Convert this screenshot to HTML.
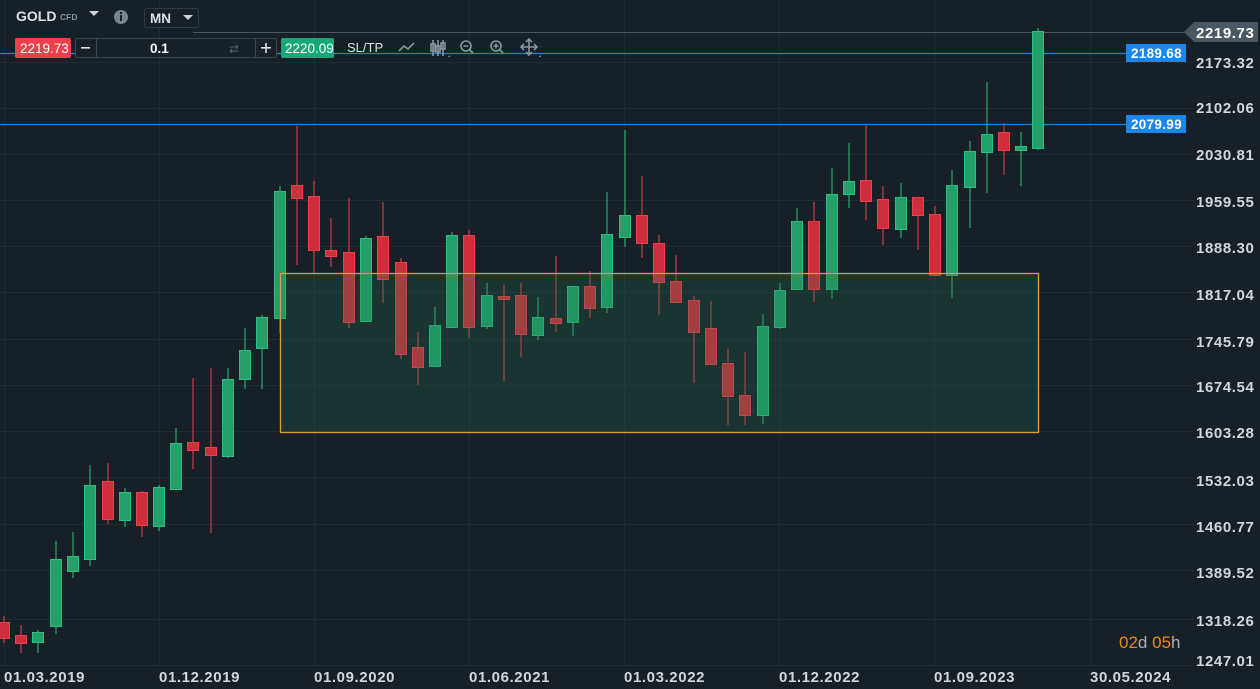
<!DOCTYPE html>
<html><head><meta charset="utf-8"><style>
html,body{margin:0;padding:0;background:#172027;width:1260px;height:689px;overflow:hidden;font-family:"Liberation Sans",Arial,sans-serif}
svg{position:absolute;left:0;top:0}
.ax{fill:#d3d6da;font-size:15px;font-family:"Liberation Sans",sans-serif;font-weight:bold;letter-spacing:0.6px}
</style></head><body>
<svg width="1260" height="689" viewBox="0 0 1260 689">
<rect width="1260" height="689" fill="#172027"/>
<g stroke="#212b32" stroke-width="1">
<line x1="4.5" y1="0" x2="4.5" y2="665"/><line x1="159.5" y1="0" x2="159.5" y2="665"/><line x1="314.5" y1="0" x2="314.5" y2="665"/><line x1="469.5" y1="0" x2="469.5" y2="665"/><line x1="624.5" y1="0" x2="624.5" y2="665"/><line x1="779.5" y1="0" x2="779.5" y2="665"/><line x1="934.5" y1="0" x2="934.5" y2="665"/><line x1="1090.5" y1="0" x2="1090.5" y2="665"/>
<line x1="0" y1="62.5" x2="1193" y2="62.5"/><line x1="0" y1="108.5" x2="1193" y2="108.5"/><line x1="0" y1="154.5" x2="1193" y2="154.5"/><line x1="0" y1="200.5" x2="1193" y2="200.5"/><line x1="0" y1="246.5" x2="1193" y2="246.5"/><line x1="0" y1="292.5" x2="1193" y2="292.5"/><line x1="0" y1="339.5" x2="1193" y2="339.5"/><line x1="0" y1="385.5" x2="1193" y2="385.5"/><line x1="0" y1="431.5" x2="1193" y2="431.5"/><line x1="0" y1="477.5" x2="1193" y2="477.5"/><line x1="0" y1="524.5" x2="1193" y2="524.5"/><line x1="0" y1="570.5" x2="1193" y2="570.5"/><line x1="0" y1="619.5" x2="1193" y2="619.5"/><line x1="0" y1="665.5" x2="1193" y2="665.5"/>
</g>
<line x1="193" y1="32.5" x2="1190" y2="32.5" stroke="#4a555d"/>
<line x1="0" y1="53.5" x2="1126" y2="53.5" stroke="#1a7fe0" stroke-width="1.3"/>
<line x1="0" y1="124.5" x2="1126" y2="124.5" stroke="#1a7fe0" stroke-width="1.3"/>
<g stroke-width="1">
<g fill="#24a06a" stroke="#2cc07e">
<line x1="38" y1="630" x2="38" y2="653"/><rect x="32.5" y="632.5" width="11" height="10"/>
<line x1="56" y1="541" x2="56" y2="634"/><rect x="50.5" y="559.5" width="11" height="67"/>
<line x1="73" y1="532" x2="73" y2="578"/><rect x="67.5" y="556.5" width="11" height="15"/>
<line x1="90" y1="465" x2="90" y2="566"/><rect x="84.5" y="485.5" width="11" height="74"/>
<line x1="125" y1="488" x2="125" y2="527"/><rect x="119.5" y="492.5" width="11" height="28"/>
<line x1="159" y1="485" x2="159" y2="531"/><rect x="153.5" y="487.5" width="11" height="39"/>
<line x1="176" y1="428" x2="176" y2="490"/><rect x="170.5" y="443.5" width="11" height="46"/>
<line x1="228" y1="368" x2="228" y2="458"/><rect x="222.5" y="379.5" width="11" height="77"/>
<line x1="245" y1="328" x2="245" y2="389"/><rect x="239.5" y="350.5" width="11" height="29"/>
<line x1="262" y1="315" x2="262" y2="389"/><rect x="256.5" y="317.5" width="11" height="31"/>
<line x1="280" y1="186" x2="280" y2="333"/><rect x="274.5" y="191.5" width="11" height="127"/>
<line x1="366" y1="236" x2="366" y2="322"/><rect x="360.5" y="238.5" width="11" height="83"/>
<line x1="435" y1="307" x2="435" y2="367"/><rect x="429.5" y="325.5" width="11" height="41"/>
<line x1="452" y1="232" x2="452" y2="328"/><rect x="446.5" y="235.5" width="11" height="92"/>
<line x1="487" y1="283" x2="487" y2="329"/><rect x="481.5" y="295.5" width="11" height="31"/>
<line x1="538" y1="297" x2="538" y2="340"/><rect x="532.5" y="317.5" width="11" height="18"/>
<line x1="573" y1="286" x2="573" y2="336"/><rect x="567.5" y="286.5" width="11" height="36"/>
<line x1="607" y1="192" x2="607" y2="313"/><rect x="601.5" y="234.5" width="11" height="73"/>
<line x1="625" y1="130" x2="625" y2="247"/><rect x="619.5" y="215.5" width="11" height="22"/>
<line x1="763" y1="314" x2="763" y2="424"/><rect x="757.5" y="326.5" width="11" height="89"/>
<line x1="780" y1="283" x2="780" y2="329"/><rect x="774.5" y="290.5" width="11" height="37"/>
<line x1="797" y1="208" x2="797" y2="290"/><rect x="791.5" y="221.5" width="11" height="68"/>
<line x1="832" y1="168" x2="832" y2="299"/><rect x="826.5" y="194.5" width="11" height="95"/>
<line x1="849" y1="143" x2="849" y2="208"/><rect x="843.5" y="181.5" width="11" height="13"/>
<line x1="901" y1="183" x2="901" y2="238"/><rect x="895.5" y="197.5" width="11" height="32"/>
<line x1="952" y1="170" x2="952" y2="298"/><rect x="946.5" y="185.5" width="11" height="90"/>
<line x1="970" y1="141" x2="970" y2="228"/><rect x="964.5" y="151.5" width="11" height="36"/>
<line x1="987" y1="82" x2="987" y2="193"/><rect x="981.5" y="134.5" width="11" height="18"/>
<line x1="1021" y1="132" x2="1021" y2="186"/><rect x="1015.5" y="146.5" width="11" height="4"/>
<line x1="1038" y1="28" x2="1038" y2="150"/><rect x="1032.5" y="31.5" width="11" height="117"/>
</g>
<g fill="#cf2f3c" stroke="#ee3f4b">
<line x1="4" y1="616" x2="4" y2="643"/><rect x="-1.5" y="622.5" width="11" height="16"/>
<line x1="21" y1="625" x2="21" y2="653"/><rect x="15.5" y="635.5" width="11" height="8"/>
<line x1="108" y1="463" x2="108" y2="524"/><rect x="102.5" y="481.5" width="11" height="38"/>
<line x1="142" y1="491" x2="142" y2="537"/><rect x="136.5" y="492.5" width="11" height="33"/>
<line x1="193" y1="378" x2="193" y2="469"/><rect x="187.5" y="442.5" width="11" height="8"/>
<line x1="211" y1="368" x2="211" y2="533"/><rect x="205.5" y="447.5" width="11" height="8"/>
<line x1="297" y1="126" x2="297" y2="265"/><rect x="291.5" y="185.5" width="11" height="13"/>
<line x1="314" y1="181" x2="314" y2="274"/><rect x="308.5" y="196.5" width="11" height="54"/>
<line x1="331" y1="218" x2="331" y2="267"/><rect x="325.5" y="250.5" width="11" height="6"/>
<line x1="349" y1="198" x2="349" y2="328"/><rect x="343.5" y="252.5" width="11" height="70"/>
<line x1="383" y1="202" x2="383" y2="303"/><rect x="377.5" y="236.5" width="11" height="43"/>
<line x1="401" y1="258" x2="401" y2="359"/><rect x="395.5" y="262.5" width="11" height="92"/>
<line x1="418" y1="332" x2="418" y2="385"/><rect x="412.5" y="347.5" width="11" height="20"/>
<line x1="469" y1="230" x2="469" y2="338"/><rect x="463.5" y="235.5" width="11" height="92"/>
<line x1="504" y1="285" x2="504" y2="381"/><rect x="498.5" y="296.5" width="11" height="3"/>
<line x1="521" y1="283" x2="521" y2="357"/><rect x="515.5" y="295.5" width="11" height="39"/>
<line x1="556" y1="256" x2="556" y2="332"/><rect x="550.5" y="318.5" width="11" height="5"/>
<line x1="590" y1="271" x2="590" y2="318"/><rect x="584.5" y="286.5" width="11" height="22"/>
<line x1="642" y1="176" x2="642" y2="258"/><rect x="636.5" y="215.5" width="11" height="28"/>
<line x1="659" y1="235" x2="659" y2="315"/><rect x="653.5" y="243.5" width="11" height="39"/>
<line x1="676" y1="255" x2="676" y2="303"/><rect x="670.5" y="281.5" width="11" height="21"/>
<line x1="694" y1="296" x2="694" y2="383"/><rect x="688.5" y="300.5" width="11" height="32"/>
<line x1="711" y1="301" x2="711" y2="364"/><rect x="705.5" y="328.5" width="11" height="36"/>
<line x1="728" y1="349" x2="728" y2="425"/><rect x="722.5" y="363.5" width="11" height="33"/>
<line x1="745" y1="352" x2="745" y2="425"/><rect x="739.5" y="395.5" width="11" height="20"/>
<line x1="814" y1="202" x2="814" y2="302"/><rect x="808.5" y="221.5" width="11" height="68"/>
<line x1="866" y1="125" x2="866" y2="220"/><rect x="860.5" y="180.5" width="11" height="21"/>
<line x1="883" y1="186" x2="883" y2="245"/><rect x="877.5" y="199.5" width="11" height="29"/>
<line x1="918" y1="197" x2="918" y2="250"/><rect x="912.5" y="197.5" width="11" height="18"/>
<line x1="935" y1="206" x2="935" y2="275"/><rect x="929.5" y="214.5" width="11" height="61"/>
<line x1="1004" y1="123" x2="1004" y2="175"/><rect x="998.5" y="132.5" width="11" height="18"/>
</g>
</g>
<rect x="280.5" y="273.5" width="758" height="159" fill="rgba(30,110,80,0.25)" stroke="#e09a38" stroke-width="1.3"/>
<g class="ax">
<text x="1196" y="68">2173.32</text><text x="1196" y="113">2102.06</text><text x="1196" y="160">2030.81</text><text x="1196" y="207">1959.55</text><text x="1196" y="253">1888.30</text><text x="1196" y="300">1817.04</text><text x="1196" y="347">1745.79</text><text x="1196" y="392">1674.54</text><text x="1196" y="438">1603.28</text><text x="1196" y="486">1532.03</text><text x="1196" y="532">1460.77</text><text x="1196" y="578">1389.52</text><text x="1196" y="626">1318.26</text><text x="1196" y="666">1247.01</text>
<text x="4" y="682">01.03.2019</text><text x="159" y="682">01.12.2019</text><text x="314" y="682">01.09.2020</text><text x="469" y="682">01.06.2021</text><text x="624" y="682">01.03.2022</text><text x="779" y="682">01.12.2022</text><text x="934" y="682">01.09.2023</text><text x="1090" y="682">30.05.2024</text>
</g>
<path d="M1184 32 L1194 22 H1258 V42 H1194 Z" fill="#4b5761"/>
<text x="1196" y="38" class="ax" style="fill:#fff">2219.73</text>
<rect x="1126" y="44" width="60" height="18" fill="#1a86f0"/>
<text x="1131" y="58" style="fill:#fff;font-size:13.5px;font-weight:bold;letter-spacing:0.3px">2189.68</text>
<rect x="1126" y="115" width="60" height="18" fill="#1a86f0"/>
<text x="1131" y="129" style="fill:#fff;font-size:13.5px;font-weight:bold;letter-spacing:0.3px">2079.99</text>
<text x="1119" y="648" style="font-size:17px;fill:#ea8a0f">02<tspan fill="#aab0b6">d</tspan> 05<tspan fill="#aab0b6">h</tspan></text>
<text x="16" y="21" style="fill:#dfe2e5;font-size:14px;font-weight:bold">GOLD</text>
<text x="60" y="20" style="fill:#8a939a;font-size:8.5px;font-weight:bold">CFD</text>
<path d="M89 11 H99 L94 16 Z" fill="#d0d4d8"/>
<circle cx="121" cy="17" r="7" fill="#7c858c"/><rect x="120" y="15" width="2" height="6" fill="#172027"/><rect x="120" y="12" width="2" height="2" fill="#172027"/>
<rect x="144.5" y="8.5" width="54" height="19" fill="#172027" stroke="#2f3a42" rx="2"/>
<text x="150" y="23" style="fill:#dfe2e5;font-size:13.5px;font-weight:bold">MN</text>
<path d="M183 15 H193 L188 20 Z" fill="#d0d4d8"/>
<rect x="15" y="38" width="56" height="20" rx="2" fill="#ef3f4c"/>
<text x="20" y="53" style="fill:#fff;font-size:13.5px">2219.73</text>
<rect x="75.5" y="38.5" width="201" height="19" rx="2" fill="#172027" stroke="#3a454d"/>
<line x1="96.5" y1="39" x2="96.5" y2="57" stroke="#3a454d"/><line x1="255.5" y1="39" x2="255.5" y2="57" stroke="#3a454d"/>
<rect x="81" y="47" width="9" height="1.6" fill="#dfe2e5"/>
<rect x="261" y="47" width="10" height="1.6" fill="#dfe2e5"/><rect x="265.2" y="43" width="1.6" height="10" fill="#dfe2e5"/>
<text x="150" y="53" style="fill:#fff;font-size:13.5px;font-weight:bold">0.1</text>
<text x="229" y="53" style="fill:#555f66;font-size:12px">⇄</text>
<rect x="281" y="38" width="53" height="20" rx="2" fill="#17a876"/>
<text x="285" y="53" style="fill:#fff;font-size:13.5px">2220.09</text>
<text x="347" y="52" style="fill:#dfe2e5;font-size:13px">SL/TP</text>
<g stroke="#8c959c" stroke-width="1.6" fill="none">
<path d="M399 51 L404 46 L408 49 L414 43"/>
<path d="M433 40 V56 M438 40 V56 M443 40 V56"/><rect x="431" y="44" width="4" height="7"/><rect x="436" y="46" width="4" height="6"/><rect x="441" y="43" width="4" height="6"/>
<circle cx="466" cy="46" r="5"/><path d="M469.5 49.5 L473 53 M463.5 46 H468.5"/>
<circle cx="496" cy="46" r="5"/><path d="M499.5 49.5 L503 53 M493.5 46 H498.5 M496 43.5 V48.5"/>
<path d="M521 47 H537 M529 39 V55"/><path d="M526 42 L529 39 L532 42 M526 52 L529 55 L532 52 M524 44 L521 47 L524 50 M534 44 L537 47 L534 50"/>
</g>
<path d="M448 57 L450 55 V57 Z M539 57 L541 55 V57 Z" fill="#8c959c"/>
</svg>
</body></html>
